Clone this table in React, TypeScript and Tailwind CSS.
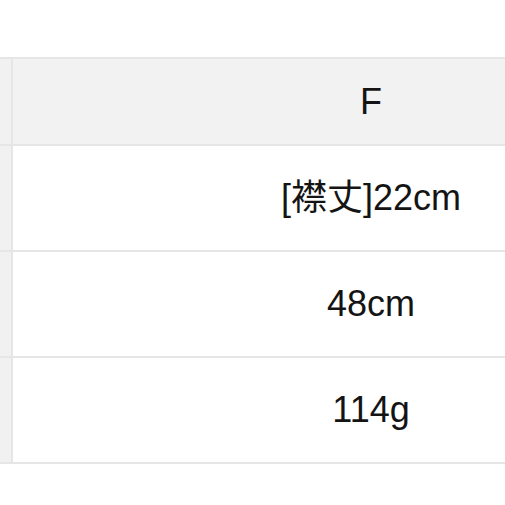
const rows = ["[襟丈]22cm", "48cm", "114g"];

export default function App() {
  return (
    <div className="w-[505px] h-[505px] overflow-hidden bg-white pt-[57px]">
      <div
        className="w-[760px] border-t-2 border-[#e6e6e6] text-[#141414]"
        style={{ fontFamily: '"Liberation Sans", "Noto Sans CJK JP", sans-serif' }}
      >
        <div className="flex h-[87px] border-b-2 border-[#e6e6e6]">
          <div className="w-[13px] bg-[#f1f1f1] border-r-2 border-[#e6e6e6]" />
          <div className="w-[716px] bg-[#f2f2f2] flex items-center justify-center text-[36px] leading-none">
            F
          </div>
        </div>
        {rows.map((r) => (
          <div key={r} className="flex h-[106px] border-b-2 border-[#e6e6e6]">
            <div className="w-[13px] bg-[#f1f1f1] border-r-2 border-[#e6e6e6]" />
            <div className="w-[716px] bg-white flex items-center justify-center text-[36px] leading-none">
              {r}
            </div>
          </div>
        ))}
      </div>
    </div>
  );
}
